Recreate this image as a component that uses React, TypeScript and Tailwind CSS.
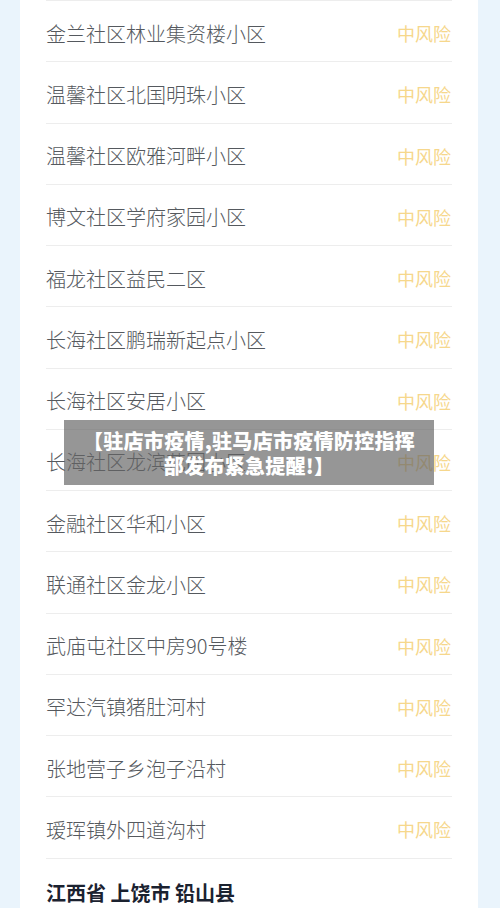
const rows = [
  '金兰社区林业集资楼小区',
  '温馨社区北国明珠小区',
  '温馨社区欧雅河畔小区',
  '博文社区学府家园小区',
  '福龙社区益民二区',
  '长海社区鹏瑞新起点小区',
  '长海社区安居小区',
  '长海社区龙滨花园小区',
  '金融社区华和小区',
  '联通社区金龙小区',
  '武庙屯社区中房90号楼',
  '罕达汽镇猪肚河村',
  '张地营子乡泡子沿村',
  '瑷珲镇外四道沟村',
];

export default function App() {
  return (
    <div
      className="relative h-[908px] w-[500px] overflow-hidden bg-[#eaf4fc]"
      style={{ fontFamily: '"Noto Sans CJK SC", "Noto Sans", sans-serif' }}
    >
      <div className="mx-[20px] w-[458px] h-full bg-white px-[26px]">
        <div className="border-t border-[#ededed]">
          {rows.map((name) => (
            <div
              key={name}
              className="flex h-[61.25px] items-center justify-between border-b border-[#ededed] pt-[5px]"
            >
              <span className="text-[20px] font-light text-[#55595e]">{name}</span>
              <span className="pr-[1px] text-[18px] font-normal text-[#f6d78c]">中风险</span>
            </div>
          ))}
        </div>
        <div className="pt-[19px] text-[20px] font-bold text-[#1b2230]">江西省 上饶市 铅山县</div>
      </div>

      {/* caption overlay */}
      <div className="absolute left-[64px] top-[420px] flex h-[65px] w-[370px] items-center justify-center bg-[rgba(100,100,100,0.68)]">
        <p className="text-center text-[20px] font-black leading-[25px] tracking-[0.3px] text-white">
          【驻店市疫情,驻马店市疫情防控指挥
          <br />
          部发布紧急提醒!】
        </p>
      </div>
    </div>
  );
}
